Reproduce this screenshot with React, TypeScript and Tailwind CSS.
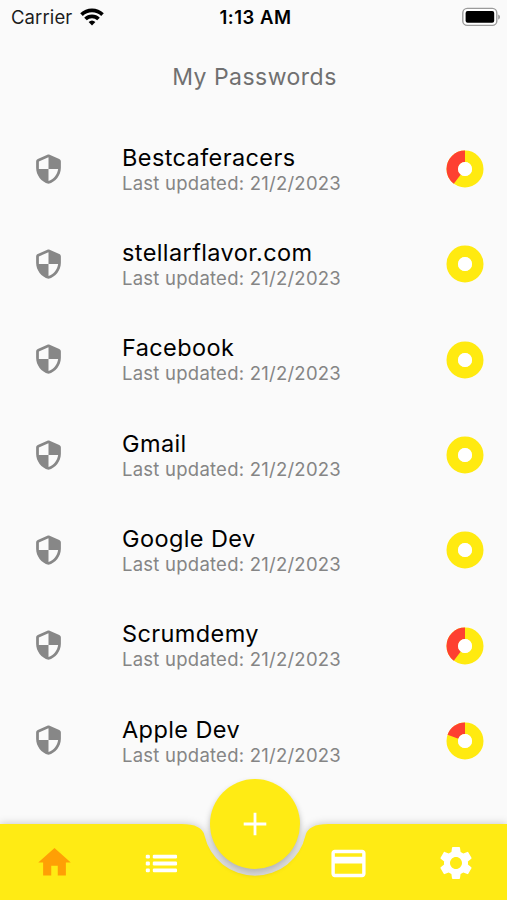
import React from 'react';
import { MdCreditCard, MdHome, MdSettings } from 'react-icons/md';

interface PasswordEntry {
  name: string;
  updated: string;
  strength: number;
}

const passwords: PasswordEntry[] = [
  { name: 'Bestcaferacers', updated: '21/2/2023', strength: 0.6 },
  { name: 'stellarflavor.com', updated: '21/2/2023', strength: 1 },
  { name: 'Facebook', updated: '21/2/2023', strength: 1 },
  { name: 'Gmail', updated: '21/2/2023', strength: 1 },
  { name: 'Google Dev', updated: '21/2/2023', strength: 1 },
  { name: 'Scrumdemy', updated: '21/2/2023', strength: 0.6 },
  { name: 'Apple Dev', updated: '21/2/2023', strength: 0.8 },
];

const ShieldIcon: React.FC = () => (
  <svg viewBox="0 0 24 24" className="mb-px h-8 w-[33px] fill-[#878787]" preserveAspectRatio="none">
    <path d="M11.19 1.36l-7 3.11C3.47 4.79 3 5.51 3 6.3V11c0 5.55 3.84 10.74 9 12 5.16-1.26 9-6.45 9-12V6.3c0-.79-.47-1.51-1.19-1.83l-7-3.11c-.51-.23-1.11-.23-1.62 0zM12 11.99h7c-.53 4.12-3.28 7.79-7 8.94V12H5V6.3l7-3.11v8.8z" />
  </svg>
);

const ListIcon: React.FC = () => (
  <svg viewBox="0 0 24 24" className="h-[41px] w-[41px] fill-current">
    <rect x="2.8" y="6.9" width="2.4" height="2.2" rx="0.7" />
    <rect x="2.8" y="10.9" width="2.4" height="2.2" rx="0.7" />
    <rect x="2.8" y="14.9" width="2.4" height="2.2" rx="0.7" />
    <rect x="6.9" y="6.9" width="14.2" height="2.2" rx="0.7" />
    <rect x="6.9" y="10.9" width="14.2" height="2.2" rx="0.7" />
    <rect x="6.9" y="14.9" width="14.2" height="2.2" rx="0.7" />
  </svg>
);

const StrengthRing: React.FC<{ value: number }> = ({ value }) => {
  const length = 2 * Math.PI * 12.75;
  return (
    <svg viewBox="0 0 38 38" className="h-[38px] w-[38px] -rotate-90">
      <circle cx="19" cy="19" r="12.75" fill="none" stroke="#ffea10" strokeWidth="11.5" />
      {value < 1 && (
        <circle
          cx="19"
          cy="19"
          r="12.75"
          fill="none"
          stroke="#fe4031"
          strokeWidth="11.5"
          strokeDasharray={`${length * (1 - value)} ${length}`}
          strokeDashoffset={-length * value}
        />
      )}
      <circle cx="19" cy="19" r="7" fill="#fff" />
    </svg>
  );
};

const StatusBar: React.FC = () => (
  <div className="grid h-[34px] grid-cols-3 items-center pl-[11px] pr-[7px] text-black">
    <div className="flex items-center gap-[8px]">
      <span className="pt-px text-[18.5px] tracking-[0.1px] text-[#1c1c1c]">Carrier</span>
      <svg viewBox="0 0 24 18" className="h-[18px] w-6" fill="none" stroke="#000" strokeWidth="3.7">
        <path d="M1.5 6.6a15 15 0 0 1 21 0" />
        <path d="M5.5 11a9.2 9.2 0 0 1 13 0" />
        <path d="M8.6 14.1a5 5 0 0 1 6.8 0L12 17.5z" fill="#000" stroke="none" />
      </svg>
    </div>
    <span className="pt-px text-center text-[18.5px] font-semibold tracking-[0.5px]">1:13 AM</span>
    <svg viewBox="0 0 39 20" className="mb-px h-5 w-[39px] justify-self-end">
      <rect x="1.8" y="1.4" width="34" height="17" rx="4.5" fill="#fff" stroke="#9b9b9b" strokeWidth="1.4" />
      <rect x="4.6" y="4" width="28.6" height="11.8" rx="2" />
      <path d="M37.2 7.4c2.4.8 2.4 4.4 0 5.2z" fill="#9b9b9b" />
    </svg>
  </div>
);

const PasswordRow: React.FC<{ entry: PasswordEntry }> = ({ entry }) => (
  <li className="flex h-[95.3px] items-center pl-8 pr-[23px]">
    <ShieldIcon />
    <div className="ml-[57px] flex-1 pt-[1.5px]">
      <h2 className="text-[23.5px] leading-[26px] tracking-[0.4px] text-black">{entry.name}</h2>
      <p className="text-[18.5px] leading-[24px] tracking-[0.24px] text-[#858585]">
        Last updated: {entry.updated}
      </p>
    </div>
    <StrengthRing value={entry.strength} />
  </li>
);

const BottomBar: React.FC = () => (
  <nav className="relative h-[76px] text-white">
    {/* Bar with a round notch for the button */}
    <svg
      viewBox="0 0 507 76"
      className="absolute inset-0 h-[76px] w-full overflow-visible fill-[#ffeb14] drop-shadow-[0_0_4px_rgba(0,0,0,0.22)]"
    >
      <path d="M0 0H181.6Q201.9 0 204.5 11.5A51.8 51.8 0 0 0 305.5 11.5Q308.1 0 328.4 0H507V76H0z" />
    </svg>
    <button className="absolute -top-[45px] left-[210px] flex h-[90px] w-[90px] items-center justify-center rounded-full bg-[#ffeb14] shadow-[0_4px_6px_rgba(0,0,0,0.28)]">
      <svg viewBox="0 0 24 24" className="h-6 w-6" stroke="#fff" strokeWidth="2.8">
        <path d="M12 0.7v22.6M0.7 12h22.6" />
      </svg>
    </button>
    <div className="pointer-events-none relative flex h-[79px] items-center justify-between pl-px">
      <div className="flex">
        <span className="flex w-[107px] justify-center text-[#ff9f05]">
          <MdHome size={39} />
        </span>
        <span className="flex w-[107px] justify-center">
          <ListIcon />
        </span>
      </div>
      <div className="-mr-[2px] flex">
        <span className="flex w-[107px] justify-center">
          <MdCreditCard size={41} />
        </span>
        <span className="flex w-[107px] justify-center">
          <MdSettings size={40} />
        </span>
      </div>
    </div>
  </nav>
);

const App: React.FC = () => (
  <div className="flex h-[900px] w-[507px] flex-col overflow-hidden bg-[#fafafa] font-['Inter','Liberation_Sans',sans-serif]">
    <StatusBar />
    <h1 className="mt-[27px] pl-[2px] text-center text-[23px] leading-8 tracking-[0.48px] text-[#707070]">
      My Passwords
    </h1>
    <ul className="mt-[28.5px] flex-1">
      {passwords.map((entry) => (
        <PasswordRow key={entry.name} entry={entry} />
      ))}
    </ul>
    <BottomBar />
  </div>
);

export default App;
